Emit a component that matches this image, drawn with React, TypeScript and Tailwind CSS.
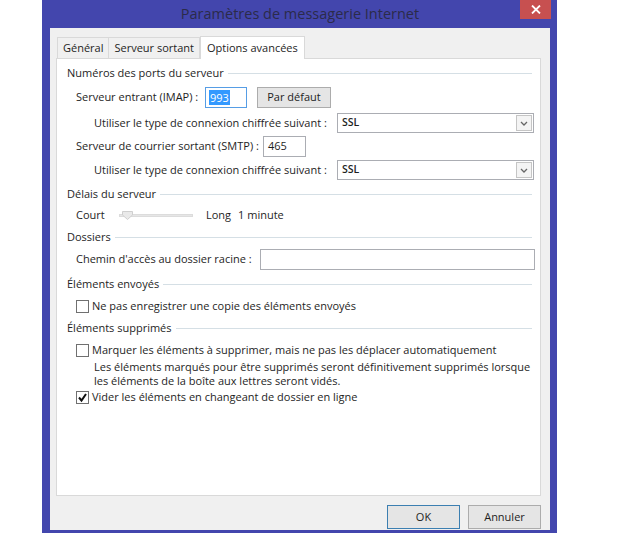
import React from 'react';

const font = { fontFamily: '"Open Sans", "Noto Sans", "Liberation Sans", sans-serif' };

function GroupLabel({ text, mt }: { text: string; mt: string }) {
  return (
    <div className={`flex items-center h-[16px] pl-[10px] pr-[8px] ${mt}`}>
      <span className="whitespace-nowrap">{text}</span>
      <div className="flex-1 h-px bg-[#d5dfe5] ml-[4px]" />
    </div>
  );
}

function Select({ w }: { w: string }) {
  return (
    <div className={`flex items-center h-[20px] ${w} bg-white border border-[#abadb3] shrink-0`}>
      <span className="flex-1 pl-[4px] font-semibold text-[10.5px]">SSL</span>
      <div className="w-[16px] h-[16px] mr-[1px] flex items-center justify-center bg-[#f4f4f4] border border-[#c5c5c5]">
        <svg width="8" height="5" viewBox="0 0 8 5">
          <path d="M1 1 L4 4 L7 1" stroke="#666" strokeWidth="1.3" fill="none" />
        </svg>
      </div>
    </div>
  );
}

function Checkbox({ checked }: { checked?: boolean }) {
  return (
    <div className="w-[13px] h-[13px] border border-[#707070] bg-white flex items-center justify-center shrink-0">
      {checked && (
        <svg width="11" height="11" viewBox="0 0 11 11">
          <path d="M2 5.5 L4.5 8.5 L9 2" stroke="#111" strokeWidth="2" fill="none" />
        </svg>
      )}
    </div>
  );
}

export default function App() {
  return (
    <div className="w-[629px] h-[536px] bg-white text-[11px] text-[#1e1e1e] whitespace-nowrap" style={font}>
      <div className="ml-[42px] w-[515px] h-[533px] bg-[#4346ad] flex flex-col px-[8px] pr-[7px] pb-[3px]">
        {/* title bar */}
        <div className="h-[28px] flex items-start relative shrink-0">
          <div className="flex-1 text-center text-[14.5px] text-[#2b2b4a] pt-[3px]">Paramètres de messagerie Internet</div>
          <div className="absolute right-[-1px] top-0 w-[31px] h-[19px] bg-[#c75050] flex items-center justify-center">
            <svg width="10" height="9" viewBox="0 0 10 9">
              <path d="M1 0.5 L9 8.5 M9 0.5 L1 8.5" stroke="white" strokeWidth="1.8" />
            </svg>
          </div>
        </div>
        {/* client */}
        <div className="flex-1 bg-[#f0f0f0] flex flex-col pl-[6px] pr-[9px]">
          {/* tabs */}
          <div className="flex items-end h-[30px] pl-[1px] shrink-0">
            <div className="h-[21px] px-[5px] flex items-center border border-[#d9d9d9] border-b-0 bg-[#f0f0f0]">Général</div>
            <div className="h-[21px] px-[5px] flex items-center border border-[#d9d9d9] border-b-0 border-l-0 bg-[#f0f0f0]">Serveur sortant</div>
            <div className="h-[23px] px-[6px] flex items-center border border-[#d9d9d9] border-b-0 bg-white relative z-10 mb-[-1px]">Options avancées</div>
          </div>
          {/* panel */}
          <div className="h-[438px] bg-white border border-[#d9d9d9] flex flex-col shrink-0">
            <GroupLabel text="Numéros des ports du serveur" mt="mt-[6px]" />
            <div className="flex items-center h-[21px] mt-[6px] pl-[19px]">
              <span className="w-[129px] shrink-0">Serveur entrant (IMAP) :</span>
              <div className="w-[42px] h-[21px] border border-[#569de5] bg-white flex items-center pl-[3px] shrink-0">
                <span className="bg-[#3399ff] text-white leading-[15px] px-[1px]">993</span>
              </div>
              <div className="ml-[10px] w-[74px] h-[21px] border border-[#acacac] bg-[#e5e5e5] flex items-center justify-center shrink-0">Par défaut</div>
            </div>
            <div className="flex items-center h-[20px] mt-[5px] pl-[37px]">
              <span className="w-[243px] shrink-0">Utiliser le type de connexion chiffrée suivant :</span>
              <Select w="w-[197px]" />
            </div>
            <div className="flex items-center h-[21px] mt-[3px] pl-[19px]">
              <span className="w-[187px] shrink-0">Serveur de courrier sortant (SMTP) :</span>
              <div className="w-[43px] h-[21px] border border-[#abadb3] bg-white flex items-center pl-[4px] shrink-0">465</div>
            </div>
            <div className="flex items-center h-[20px] mt-[3px] pl-[37px]">
              <span className="w-[243px] shrink-0">Utiliser le type de connexion chiffrée suivant :</span>
              <Select w="w-[197px]" />
            </div>
            <GroupLabel text="Délais du serveur" mt="mt-[6px]" />
            <div className="flex items-center h-[16px] mt-[5px] pl-[19px]">
              <span className="w-[43px] shrink-0">Court</span>
              <div className="relative w-[74px] h-[10px] flex items-center shrink-0">
                <div className="w-full h-[3px] bg-[#e6e6e6] border border-[#dcdcdc]" />
                <svg className="absolute left-[3px] top-[1px]" width="11" height="9" viewBox="0 0 11 9">
                  <path d="M0.5 0.5 H10.5 V4 L5.5 8.5 L0.5 4 Z" fill="#e9e9e9" stroke="#cfcfcf" />
                </svg>
              </div>
              <span className="ml-[13px]">Long</span>
              <span className="ml-[7px]">1 minute</span>
            </div>
            <GroupLabel text="Dossiers" mt="mt-[6px]" />
            <div className="flex items-center h-[21px] mt-[4px] pl-[19px]">
              <span className="w-[184px] shrink-0">Chemin d'accès au dossier racine :</span>
              <div className="w-[275px] h-[21px] border border-[#abadb3] bg-white shrink-0" />
            </div>
            <GroupLabel text="Éléments envoyés" mt="mt-[6px]" />
            <div className="flex items-center h-[16px] mt-[6px] pl-[19px] gap-[3px]">
              <Checkbox />
              <span>Ne pas enregistrer une copie des éléments envoyés</span>
            </div>
            <GroupLabel text="Éléments supprimés" mt="mt-[6px]" />
            <div className="flex items-center h-[16px] mt-[6px] pl-[19px] gap-[3px]">
              <Checkbox />
              <span>Marquer les éléments à supprimer, mais ne pas les déplacer automatiquement</span>
            </div>
            <div className="pl-[37px] mt-[2px] leading-[14px]">
              <div>Les éléments marqués pour être supprimés seront définitivement supprimés lorsque</div>
              <div>les éléments de la boîte aux lettres seront vidés.</div>
            </div>
            <div className="flex items-center h-[16px] mt-[1px] pl-[19px] gap-[3px]">
              <Checkbox checked />
              <span>Vider les éléments en changeant de dossier en ligne</span>
            </div>
          </div>
          {/* buttons */}
          <div className="flex justify-end gap-[8px] mt-[9px]">
            <div className="w-[73px] h-[24px] border border-[#3c7fb1] bg-[#e5e5e5] flex items-center justify-center">OK</div>
            <div className="w-[73px] h-[24px] border border-[#acacac] bg-[#e5e5e5] flex items-center justify-center">Annuler</div>
          </div>
        </div>
      </div>
    </div>
  );
}
